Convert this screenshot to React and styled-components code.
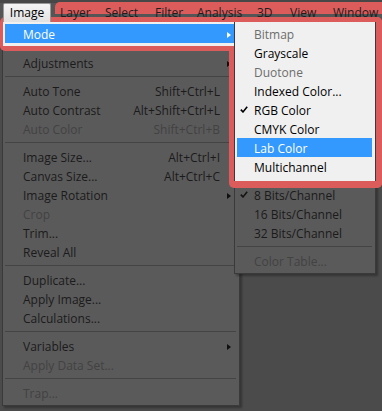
import React from 'react';
import styled, { createGlobalStyle } from 'styled-components';

const GlobalStyle = createGlobalStyle`
  html, body {
    margin: 0;
    padding: 0;
    background: #4b4b4b;
  }
  body {
    font-family: "Open Sans", "Noto Sans", sans-serif;
    font-size: 12px;
  }
`;

const RED = '#dc5c5c';

const Screen = styled.div`
  position: relative;
  width: 382px;
  height: 411px;
  overflow: hidden;
  background: #4b4b4b;
`;

const MenuBar = styled.div`
  position: relative;
  display: flex;
  align-items: flex-end;
  height: 22px;
  padding-left: 3px;
  background: linear-gradient(#474747 0 3px, #555 3px);
`;

const BarMark = styled.div`
  position: absolute;
  z-index: 0;
  left: 55px;
  right: 0;
  top: 2px;
  height: 12px;
  background: ${RED};
  border-radius: 5px 0 0 0;
`;

const ImageTab = styled.div`
  position: relative;
  z-index: 2;
  box-sizing: border-box;
  width: 48px;
  height: 19px;
  border: 1px solid #989898;
  border-bottom: none;
  border-radius: 2px 2px 0 0;
  background: linear-gradient(#f5f5f5, #e1e1e1);
  color: #000;
  text-align: center;
  line-height: 18px;
`;

const BarItems = styled.div`
  display: flex;
  margin-left: 9px;
  align-self: stretch;
`;

const BarItem = styled.div`
  position: relative;
  z-index: 2;
  width: ${p => p.$w}px;
  padding-top: 3px;
  line-height: 19px;
  color: #1d1d1d;
  white-space: nowrap;
`;

const Body = styled.div`
  display: flex;
  align-items: flex-start;
`;

const Menu = styled.div`
  position: relative;
  box-sizing: border-box;
  width: ${p => p.$w}px;
  margin-left: ${p => p.$ml}px;
  padding-bottom: 3px;
  border: 1px solid #3a3a3a;
  border-top: none;
  background: #5a5a5a;
  box-shadow: 2px 2px 2px rgba(0, 0, 0, 0.3);
`;

const Section = styled.div`
  padding: ${p => p.$pt || 0}px 3px ${p => p.$pb || 0}px 2px;
  background: ${p => (p.$lit ? '#f0f0f0' : 'transparent')};
`;

const Separator = styled.div`
  height: ${p => p.$h || 9}px;
  background: ${p =>
    p.$lit
      ? 'transparent'
      : `linear-gradient(transparent ${Math.floor((p.$h || 9) / 2)}px, #444 0 ${Math.floor((p.$h || 9) / 2) + 1}px, transparent 0)`};
`;

const textColor = p => {
  if (p.$active) return '#fff';
  if (p.$lit) return p.$disabled ? '#6d6d6d' : '#000';
  return p.$disabled ? '#424242' : '#1b1b1b';
};

const Row = styled.div`
  display: flex;
  align-items: flex-start;
  box-sizing: border-box;
  height: 19px;
  padding: 3px 5px 0 ${p => p.$pl}px;
  line-height: 16px;
  white-space: nowrap;
  color: ${textColor};
  background: ${p => (p.$active ? '#3399ff' : 'transparent')};
`;

const CheckSlot = styled.span`
  display: flex;
  width: 14px;
  height: 13px;
  align-items: center;
`;

const Label = styled.span`
  flex: 1;
`;

const Shortcut = styled.span`
  margin-right: 11px;
`;

const Arrow = styled.span`
  width: 0;
  height: 0;
  margin-top: 5px;
  border-left: 4px solid ${p => (p.$active ? '#fff' : p.$lit ? '#000' : '#0f0f0f')};
  border-top: 3.5px solid transparent;
  border-bottom: 3.5px solid transparent;
`;

const Ring = styled.div`
  position: absolute;
  z-index: 1;
  pointer-events: none;
  box-sizing: border-box;
  left: ${p => p.$x}px;
  top: ${p => p.$y}px;
  width: ${p => p.$w}px;
  height: ${p => p.$h}px;
  border: solid ${RED};
  border-width: ${p => p.$bw};
  border-radius: ${p => p.$r};
`;

function Check({ lit }) {
  return (
    <svg width="8" height="7" viewBox="0 0 8 7">
      <path d="M0.8 3.6 L3 5.9 L7.2 0.8" fill="none" stroke={lit ? '#000' : '#141414'} strokeWidth="1.6" />
    </svg>
  );
}

function Item({ item, lit, sub }) {
  if (item.sep) return <Separator $lit={lit} $h={item.h} />;
  return (
    <Row $pl={sub ? 3 : 18} $lit={lit} $active={item.active} $disabled={item.disabled}>
      {sub && <CheckSlot>{item.checked && <Check lit={lit} />}</CheckSlot>}
      <Label>{item.label}</Label>
      {item.keys && <Shortcut>{item.keys}</Shortcut>}
      {item.more && <Arrow $lit={lit} $active={item.active} />}
    </Row>
  );
}

const barItems = [
  ['Layer', 45],
  ['Select', 50],
  ['Filter', 42],
  ['Analysis', 60],
  ['3D', 33],
  ['View', 43],
  ['Window', 49],
];

const mainLit = [{ label: 'Mode', more: true, active: true }];

const mainDim = [
  { sep: true, h: 7 },
  { label: 'Adjustments', more: true },
  { sep: true },
  { label: 'Auto Tone', keys: 'Shift+Ctrl+L' },
  { label: 'Auto Contrast', keys: 'Alt+Shift+Ctrl+L' },
  { label: 'Auto Color', keys: 'Shift+Ctrl+B', disabled: true },
  { sep: true },
  { label: 'Image Size...', keys: 'Alt+Ctrl+I' },
  { label: 'Canvas Size...', keys: 'Alt+Ctrl+C' },
  { label: 'Image Rotation', more: true },
  { label: 'Crop', disabled: true },
  { label: 'Trim...' },
  { label: 'Reveal All' },
  { sep: true },
  { label: 'Duplicate...' },
  { label: 'Apply Image...' },
  { label: 'Calculations...' },
  { sep: true },
  { label: 'Variables', more: true },
  { label: 'Apply Data Set...', disabled: true },
  { sep: true },
  { label: 'Trap...', disabled: true },
];

const subLit = [
  { label: 'Bitmap', disabled: true },
  { label: 'Grayscale' },
  { label: 'Duotone', disabled: true },
  { label: 'Indexed Color...' },
  { label: 'RGB Color', checked: true },
  { label: 'CMYK Color' },
  { label: 'Lab Color', active: true },
  { label: 'Multichannel' },
];

const subDim = [
  { sep: true, h: 4 },
  { label: '8 Bits/Channel', checked: true },
  { label: '16 Bits/Channel' },
  { label: '32 Bits/Channel' },
  { sep: true },
  { label: 'Color Table...', disabled: true },
];

export default function App() {
  return (
    <Screen>
      <GlobalStyle />
      <MenuBar>
        <BarMark />
        <ImageTab>Image</ImageTab>
        <BarItems>
          {barItems.map(([name, w]) => (
            <BarItem key={name} $w={w}>{name}</BarItem>
          ))}
        </BarItems>
      </MenuBar>

      <Body>
        <Menu $w={238} $ml={2}>
          <Section $lit $pt={2} $pb={3}>
            {mainLit.map((it, i) => <Item key={i} item={it} lit />)}
          </Section>
          <Section>
            {mainDim.map((it, i) => <Item key={i} item={it} />)}
          </Section>
        </Menu>

        <Menu $w={142} $ml={-6}>
          <Section $lit $pt={2} $pb={5}>
            {subLit.map((it, i) => <Item key={i} item={it} lit sub />)}
          </Section>
          <Section>
            {subDim.map((it, i) => <Item key={i} item={it} sub />)}
          </Section>
        </Menu>
      </Body>

      <Ring $x={0} $y={17} $w={234} $h={34} $bw="5px 0 5px 3px" $r="5px 0 0 5px" />
      <Ring $x={234} $y={17} $w={148} $h={171} $bw="5px 6px 7px 0" $r="0 5px 5px 0" />
      <Ring $x={229} $y={46} $w={5} $h={142} $bw="0 0 0 5px" $r="0 0 0 5px" />
    </Screen>
  );
}
